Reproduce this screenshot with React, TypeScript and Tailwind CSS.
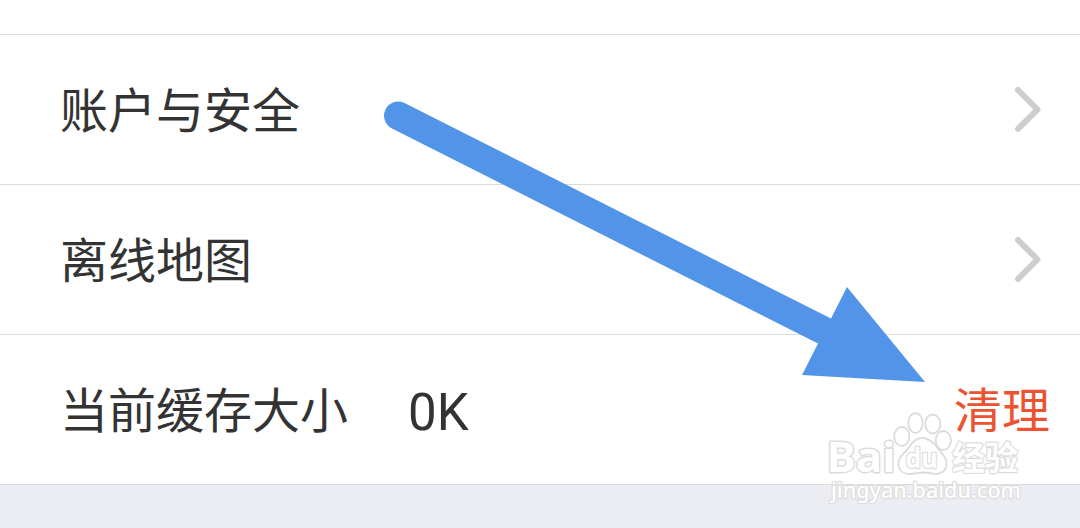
import type { ReactNode } from 'react';

type RowProps = {
  label: string;
  value?: string;
  children: ReactNode;
};

function SettingsRow({ label, value, children }: RowProps) {
  return (
    <li className="flex h-[150px] items-center border-b border-[#dcdcdc] pl-[60px]">
      <span className="pb-[5px] text-[48px] leading-[70px] whitespace-nowrap">{label}</span>
      {value && (
        <span className="ml-[60px] pt-[6px] font-['Roboto',sans-serif] text-[51px] leading-[70px]">{value}</span>
      )}
      <div className="ml-auto flex items-center">{children}</div>
    </li>
  );
}

function Chevron() {
  return (
    <svg className="mr-[38px] h-[46px] w-7" viewBox="0 0 28 46" fill="none">
      <path d="M4 3 L23.5 22.5 L4 42" stroke="#cdcdcd" strokeWidth="6" strokeLinecap="round" strokeLinejoin="round" />
    </svg>
  );
}

function Arrow() {
  return (
    <svg className="pointer-events-none absolute inset-0" width="1080" height="528" viewBox="0 0 1080 528">
      <path
        d="M404.5 103 L831 318.5 L847 287 L925 382 L802 375 L818 343.5 L392 128.5 A14 14 0 0 1 404.5 103 Z"
        fill="#5294e8"
      />
    </svg>
  );
}

function Watermark() {
  return (
    <svg
      className="pointer-events-none absolute top-[400px] left-[820px]"
      width="220"
      height="110"
      viewBox="820 400 220 110"
      fill="#ffffff"
      stroke="#dcdcdc"
      strokeWidth="1.8"
      strokeLinejoin="round"
    >
      <ellipse cx="901.8" cy="436.5" rx="7.6" ry="9.5" />
      <ellipse cx="915.5" cy="423" rx="7.2" ry="9.8" />
      <ellipse cx="932.8" cy="424" rx="7.6" ry="9.5" />
      <ellipse cx="943.3" cy="440.5" rx="7.6" ry="9.5" />
      <path d="M922 438 C914 438 911 445 906 451 C900 457 898 460 898.5 465 C899 471 904 474 910 474 C915 474 918 472.5 923 472.5 C928 472.5 932 474 937 474 C943 473 947 469 946.5 462 C946 456 940 452 936 446 C932 441 928 438 922 438 Z" />
      <g className="font-['Open_Sans','Noto_Sans_CJK_SC',sans-serif] font-bold" paintOrder="stroke">
        <text x="826.5" y="472" fontSize="42" textLength="69" lengthAdjust="spacingAndGlyphs" strokeWidth="3">Bai</text>
        <text x="905.5" y="468" fontSize="26" textLength="32" lengthAdjust="spacingAndGlyphs" strokeWidth="2.4">du</text>
        <text x="952" y="470" fontSize="33" textLength="66" lengthAdjust="spacingAndGlyphs" strokeWidth="2.4">经验</text>
      </g>
      <text
        x="831"
        y="498"
        fontSize="22"
        textLength="190"
        lengthAdjust="spacingAndGlyphs"
        paintOrder="stroke"
        strokeWidth="2.4"
        className="font-['Noto_Sans',sans-serif] font-medium"
      >
        jingyan.baidu.com
      </text>
    </svg>
  );
}

export default function App() {
  return (
    <main className="relative h-[528px] w-[1080px] overflow-hidden bg-[#ecedf2] font-['Noto_Sans_CJK_SC',sans-serif] text-[#333333]">
      <div className="h-[35px] border-b border-[#dcdcdc] bg-white" />
      <ul className="bg-white">
        <SettingsRow label="账户与安全">
          <Chevron />
        </SettingsRow>
        <SettingsRow label="离线地图">
          <Chevron />
        </SettingsRow>
        <SettingsRow label="当前缓存大小" value="0K">
          <button type="button" className="mr-[30px] pb-[5px] text-[48px] leading-[70px] whitespace-nowrap text-[#ec5330]">
            清理
          </button>
        </SettingsRow>
      </ul>
      <Arrow />
      <Watermark />
    </main>
  );
}
